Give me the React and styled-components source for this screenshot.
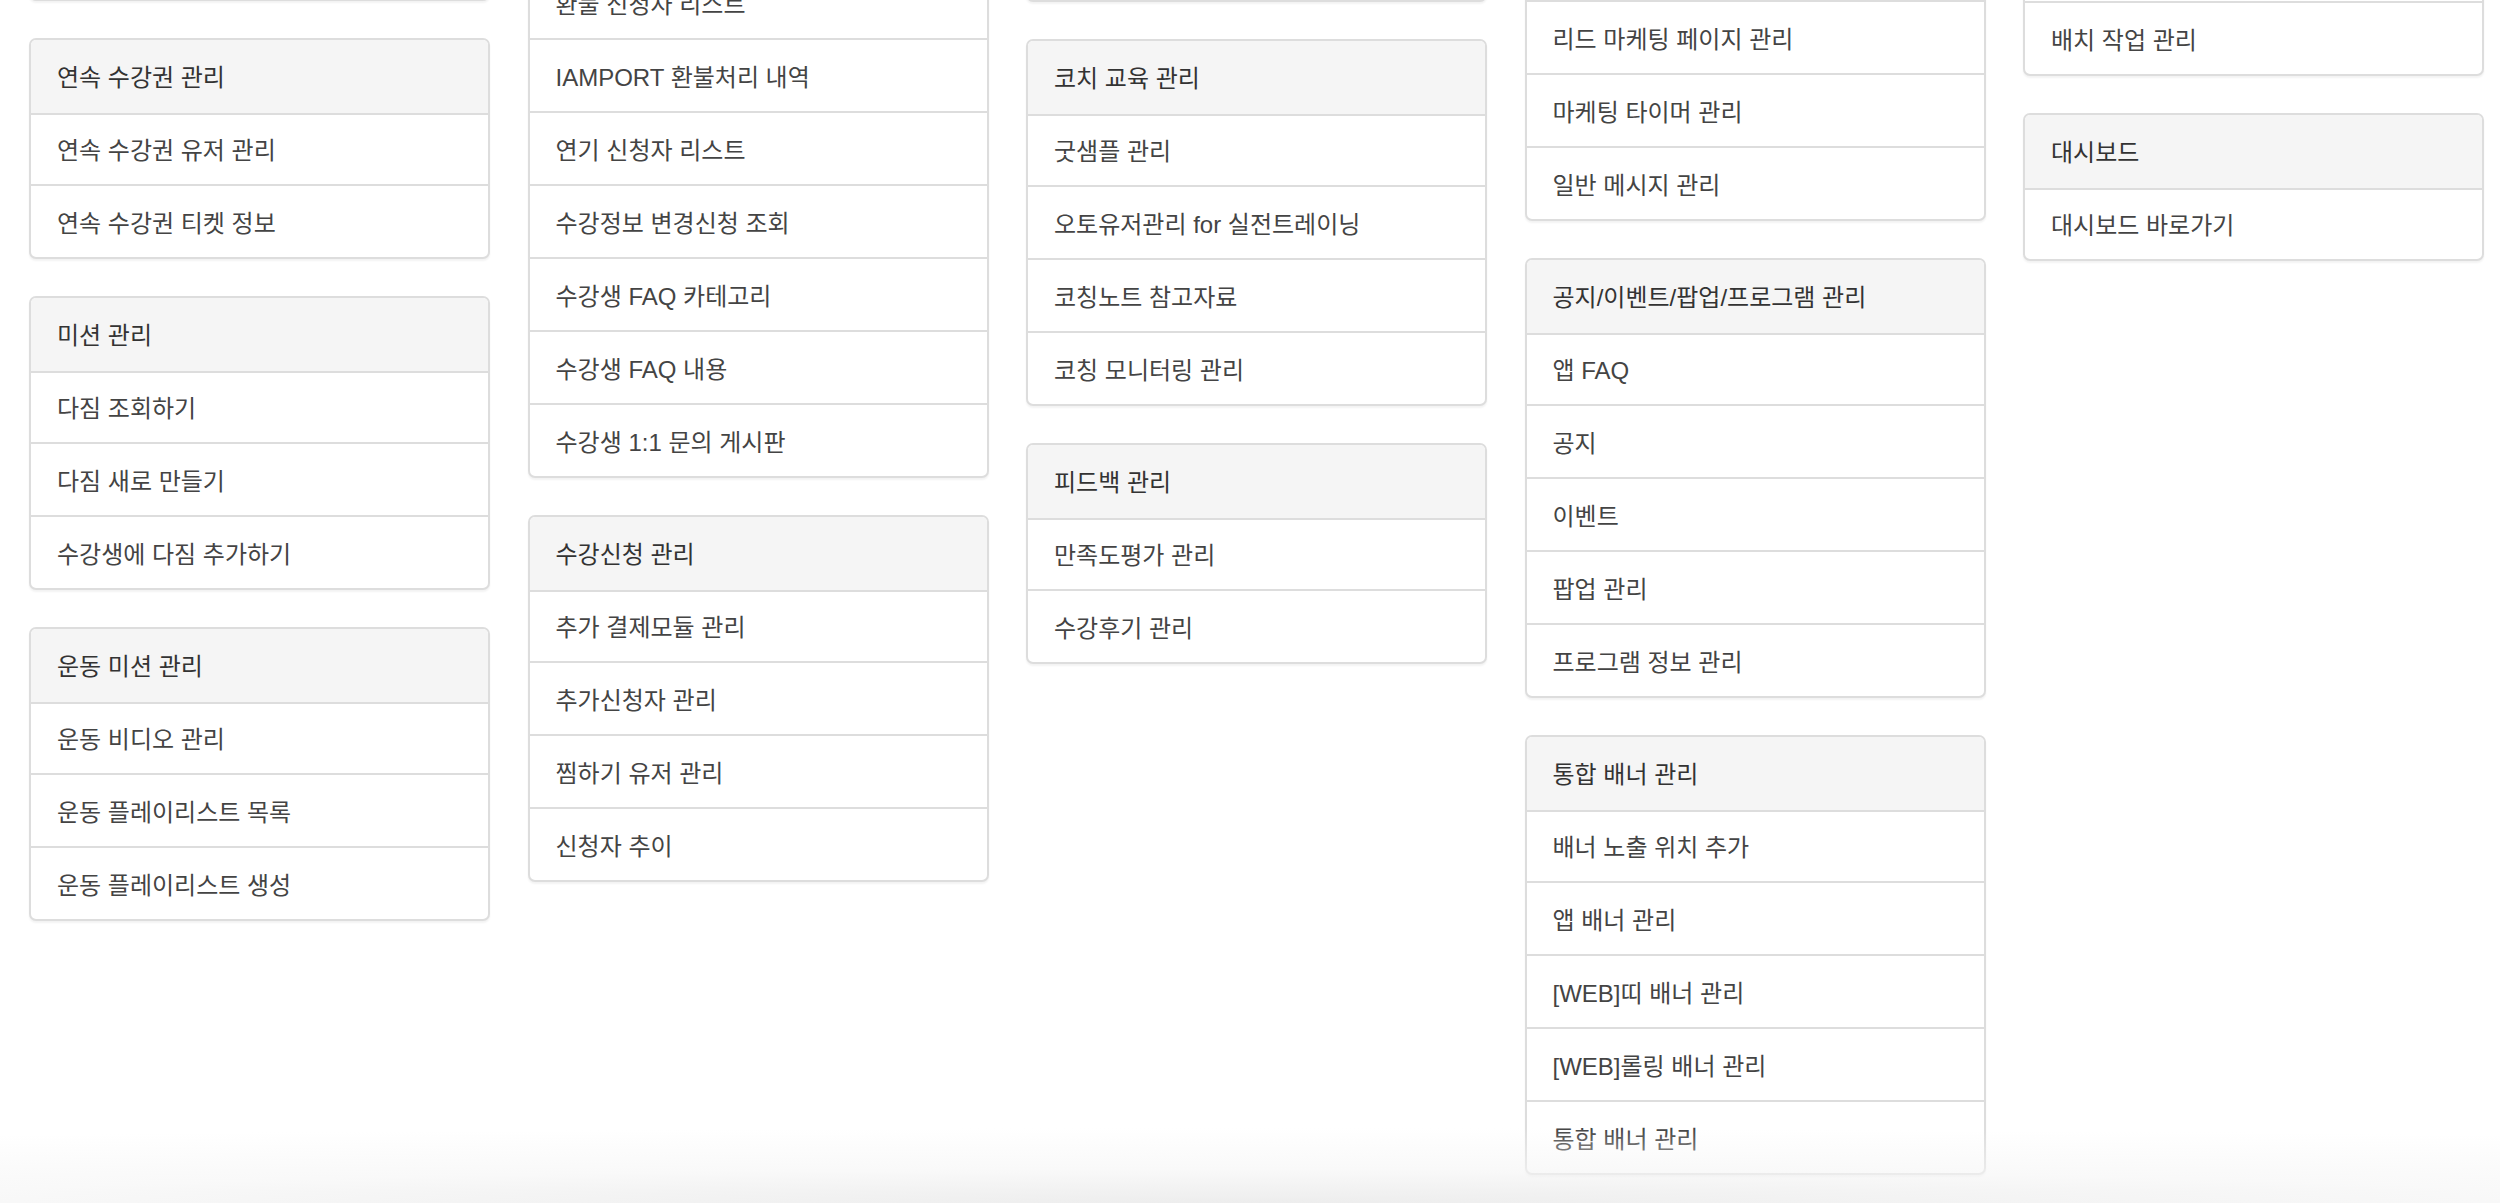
import styled, { createGlobalStyle } from "styled-components";

const GlobalStyle = createGlobalStyle`
  html, body {
    margin: 0;
    padding: 0;
    height: 100%;
    overflow: hidden;
    background: #fff;
  }
  body {
    font-family: "Liberation Sans", "Noto Sans CJK KR", sans-serif;
    color: #333;
  }
  * {
    box-sizing: border-box;
  }
`;

const Page = styled.div`
  position: relative;
  height: 1203px;
  overflow: hidden;
`;

const Grid = styled.div`
  display: grid;
  grid-template-columns: repeat(5, 461px);
  column-gap: 37.5px;
  padding-left: 29px;
  align-items: start;
`;

const Column = styled.div`
  display: flex;
  flex-direction: column;
  gap: 37px;
  margin-top: ${(p) => p.$shift}px;
`;

const Panel = styled.div`
  background: #fff;
  border: 2px solid #dddddd;
  border-radius: 7px;
  overflow: hidden;
  box-shadow: 0 2px 2px rgba(0, 0, 0, 0.05);
`;

const Heading = styled.div`
  box-sizing: content-box;
  min-height: 71px;
  display: flex;
  align-items: center;
  padding: 0 26px 2px;
  margin-bottom: -2px;
  background: #f5f5f5;
  border-bottom: 2px solid #dddddd;
  font-size: 24px;
  color: #333;
`;

const Item = styled.div`
  box-sizing: content-box;
  min-height: 71px;
  display: flex;
  align-items: center;
  padding: 0 26px 2px;
  margin-bottom: -2px;
  font-size: 24px;
  color: #444;
  &:first-child {
    margin-top: 0;
  }
  & + & {
    border-top: 2px solid #dddddd;
  }
  &:last-child {
    margin-bottom: 0;
    padding-bottom: 0;
  }
`;

const BottomFade = styled.div`
  position: absolute;
  left: 0;
  right: 0;
  bottom: 0;
  height: 75px;
  pointer-events: none;
  background: radial-gradient(120% 100% at 50% 100%, rgba(236, 236, 236, 0.95) 0%, rgba(245, 245, 245, 0.6) 45%, rgba(255, 255, 255, 0) 100%);
`;

const columns = [
  {
    shift: -74.5,
    panels: [
      { items: [""] },
      { title: "연속 수강권 관리", items: ["연속 수강권 유저 관리", "연속 수강권 티켓 정보"] },
      { title: "미션 관리", items: ["다짐 조회하기", "다짐 새로 만들기", "수강생에 다짐 추가하기"] },
      { title: "운동 미션 관리", items: ["운동 비디오 관리", "운동 플레이리스트 목록", "운동 플레이리스트 생성"] },
    ],
  },
  {
    shift: -35,
    panels: [
      {
        items: [
          "환불 신청자 리스트",
          "IAMPORT 환불처리 내역",
          "연기 신청자 리스트",
          "수강정보 변경신청 조회",
          "수강생 FAQ 카테고리",
          "수강생 FAQ 내용",
          "수강생 1:1 문의 게시판",
        ],
      },
      { title: "수강신청 관리", items: ["추가 결제모듈 관리", "추가신청자 관리", "찜하기 유저 관리", "신청자 추이"] },
    ],
  },
  {
    shift: -73.5,
    panels: [
      { items: [""] },
      { title: "코치 교육 관리", items: ["굿샘플 관리", "오토유저관리 for 실전트레이닝", "코칭노트 참고자료", "코칭 모니터링 관리"] },
      { title: "피드백 관리", items: ["만족도평가 관리", "수강후기 관리"] },
    ],
  },
  {
    shift: -73,
    panels: [
      { items: ["", "리드 마케팅 페이지 관리", "마케팅 타이머 관리", "일반 메시지 관리"] },
      { title: "공지/이벤트/팝업/프로그램 관리", items: ["앱 FAQ", "공지", "이벤트", "팝업 관리", "프로그램 정보 관리"] },
      { title: "통합 배너 관리", items: ["배너 노출 위치 추가", "앱 배너 관리", "[WEB]띠 배너 관리", "[WEB]롤링 배너 관리", "통합 배너 관리"] },
    ],
  },
  {
    shift: -72,
    panels: [
      { items: ["", "배치 작업 관리"] },
      { title: "대시보드", items: ["대시보드 바로가기"] },
    ],
  },
];

export default function App() {
  return (
    <>
      <GlobalStyle />
      <Page>
        <Grid>
          {columns.map((col, ci) => (
            <Column key={ci} $shift={col.shift}>
              {col.panels.map((panel, pi) => (
                <Panel key={pi}>
                  {panel.title && <Heading>{panel.title}</Heading>}
                  {panel.items.map((label, ii) => (
                    <Item key={ii}>{label}</Item>
                  ))}
                </Panel>
              ))}
            </Column>
          ))}
        </Grid>
        <BottomFade />
      </Page>
    </>
  );
}
